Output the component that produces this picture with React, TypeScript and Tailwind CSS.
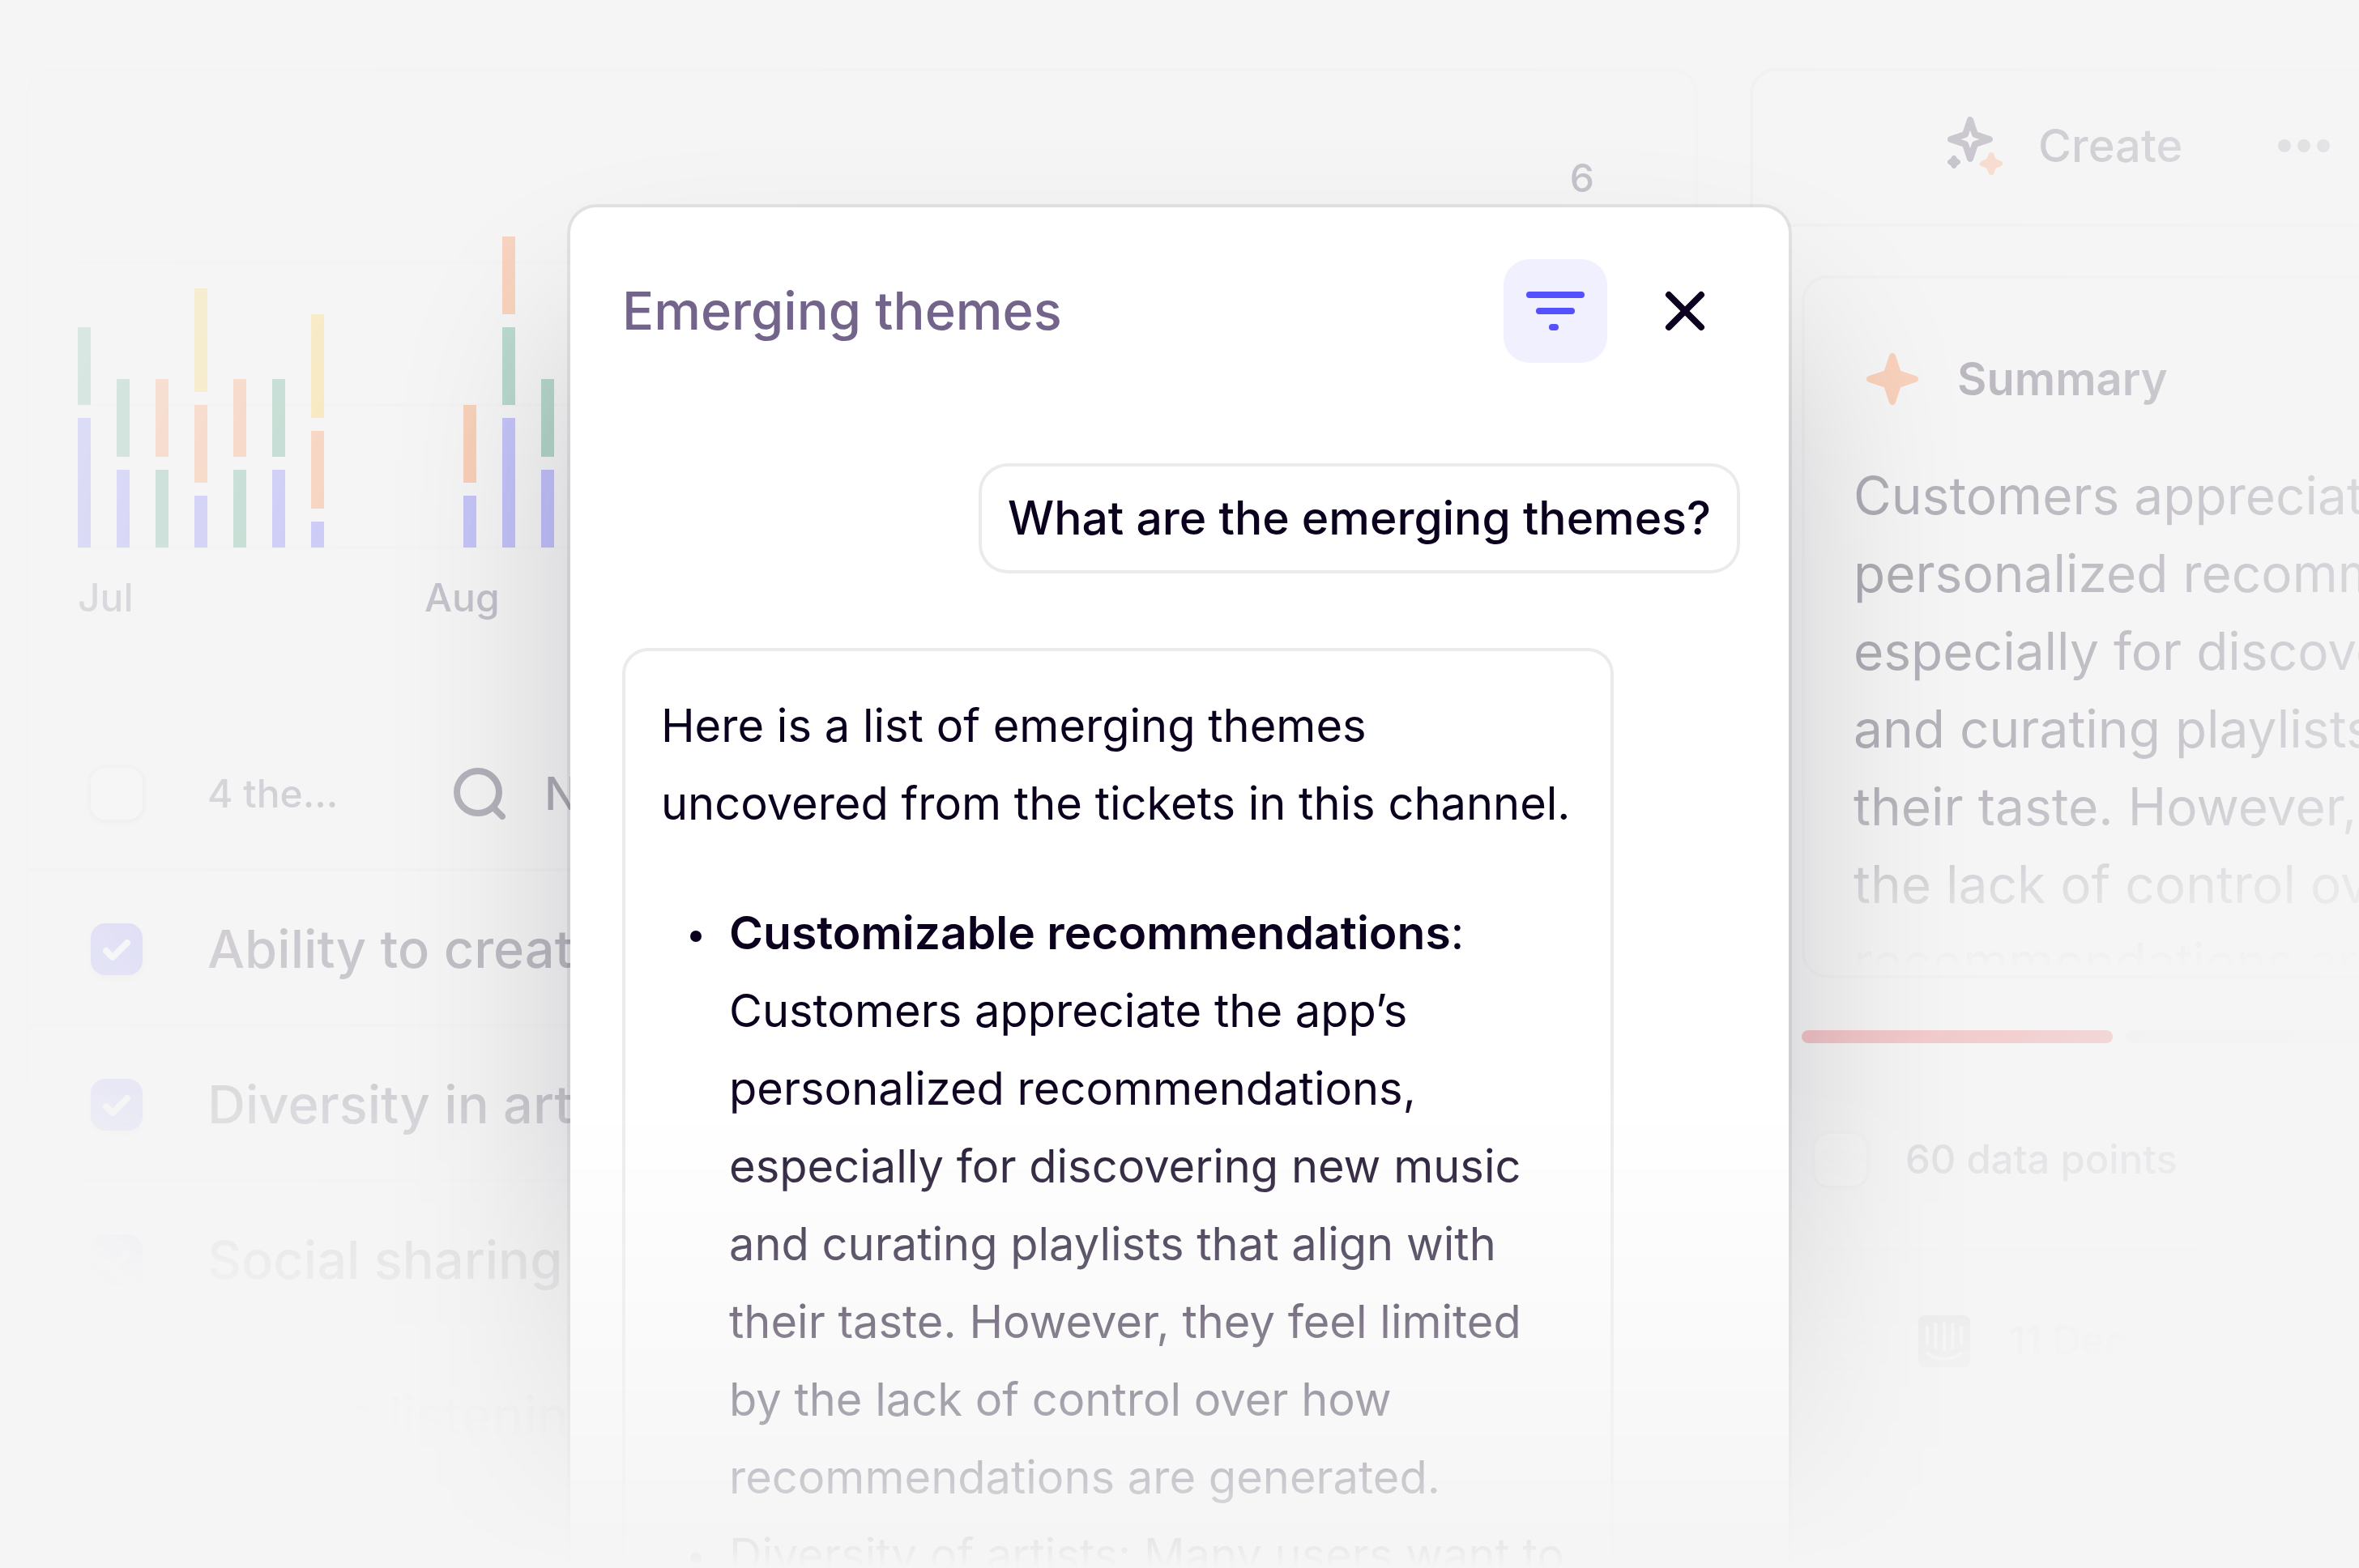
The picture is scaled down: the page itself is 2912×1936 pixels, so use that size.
import { useId } from "react";

type Segment = { color: "violet" | "green" | "orange" | "yellow"; height: number };

const SEGMENT_COLOR = {
  violet: "bg-[#544fff]",
  green: "bg-[#238f68]",
  orange: "bg-[#ff7326]",
  yellow: "bg-[#ffc61f]",
};

const v = (height: number): Segment => ({ color: "violet", height });
const g = (height: number): Segment => ({ color: "green", height });
const o = (height: number): Segment => ({ color: "orange", height });
const y = (height: number): Segment => ({ color: "yellow", height });

// Segments run from the top of a bar to its foot.
const JULY: Segment[][] = [
  [g(96), v(160)],
  [g(96), v(96)],
  [o(96), g(96)],
  [y(128), o(96), v(64)],
  [o(96), g(96)],
  [g(96), v(96)],
  [y(128), o(96), v(32)],
];
const AUGUST: Segment[][] = [
  [o(96), v(64)],
  [o(96), g(96), v(160)],
  [g(96), v(96)],
];

const THEMES = [
  "Ability to create playlists",
  "Diversity in artists",
  "Social sharing",
  "Offline listening",
];

const SUMMARY = [
  "Customers appreciate the app’s",
  "personalized recommendations,",
  "especially for discovering new music",
  "and curating playlists that align with",
  "their taste. However, they feel limited by",
  "the lack of control over how",
  "recommendations are generated.",
];

const ANSWER = [
  "Customers appreciate the app’s",
  "personalized recommendations,",
  "especially for discovering new music",
  "and curating playlists that align with",
  "their taste. However, they feel limited",
  "by the lack of control over how",
  "recommendations are generated.",
];

function Star({ className }: { className: string }) {
  return (
    <svg viewBox="0 0 64 64" className={className} aria-hidden="true">
      <path
        d="M32 4 39 25 60 32 39 39 32 60 25 39 4 32 25 25Z"
        fill="currentColor"
        stroke="currentColor"
        strokeWidth="8"
        strokeLinejoin="round"
      />
    </svg>
  );
}

function CreateIcon() {
  return (
    <svg viewBox="0 0 68 72" className="h-18 w-[68px]" fill="none" aria-hidden="true">
      <path
        d="M28 4 34 22 52 28 34 34 28 52 22 34 4 28 22 22Z"
        stroke="#0c001f"
        strokeWidth="8"
        strokeLinejoin="round"
      />
      <path d="M8 51 10 54 13 56 10 58 8 61 6 58 3 56 6 54Z" fill="#0c001f" stroke="#0c001f" strokeWidth="6" strokeLinejoin="round" />
      <path d="M54 47.500 57 55 64.500 58 57 61 54 68.500 51 61 43.500 58 51 55Z" fill="#ff7326" stroke="#ff7326" strokeWidth="7" strokeLinejoin="round" />
    </svg>
  );
}

function SearchIcon() {
  return (
    <svg viewBox="0 0 64 64" className="size-16 shrink-0" fill="none" stroke="#0c001f" strokeWidth="8" strokeLinecap="round" aria-hidden="true">
      <circle cx="30" cy="30" r="26" />
      <path d="m49 49 11 11" />
    </svg>
  );
}

function IntercomIcon() {
  return (
    <svg viewBox="0 0 64 64" className="size-16 shrink-0" aria-hidden="true">
      <rect width="64" height="64" rx="8" fill="#0c001f" />
      <g fill="none" stroke="#ffffff" strokeWidth="4" strokeLinecap="round">
        <path d="M11 15v20M21.500 11v29M32 10v32M42.500 11v29M53 15v20" />
        <path d="M11 47c12 9 30 9 42 0" />
      </g>
    </svg>
  );
}

function CheckBox({ id, label, checked = false }: { id?: string; label?: string; checked?: boolean }) {
  return (
    <span className="relative size-16 shrink-0">
      <input
        id={id}
        type="checkbox"
        aria-label={label}
        defaultChecked={checked}
        className="peer block size-16 appearance-none rounded-[18px] bg-white shadow-[0_4px_8px_rgb(12_0_31/0.12)] ring-4 ring-[#0c001f]/6 checked:bg-[#544fff] checked:ring-0"
      />
      <svg
        viewBox="0 0 64 64"
        className="pointer-events-none absolute inset-0 hidden size-16 peer-checked:block"
        fill="none"
        stroke="#ffffff"
        strokeWidth="8"
        strokeLinecap="round"
        strokeLinejoin="round"
        aria-hidden="true"
      >
        <path d="M19 34 27 42 45 24" />
      </svg>
    </span>
  );
}

function Bars({ bars }: { bars: Segment[][] }) {
  return (
    <>
      {bars.map((segments, i) => (
        <div key={i} className="flex w-4 flex-col gap-4">
          {segments.map((s, j) => (
            <div key={j} className={SEGMENT_COLOR[s.color]} style={{ height: s.height }} />
          ))}
        </div>
      ))}
    </>
  );
}

function Chart() {
  return (
    <section className="px-[60px] pt-25 font-medium text-[#4f4a65]">
      <p className="pr-16 text-right text-[48px] leading-16">6</p>
      <div className="relative mt-[70px] flex h-[356px] flex-col justify-between">
        <div className="h-1 bg-[#0c001f]/4" />
        <div className="h-1 bg-[#0c001f]/4" />
        <div className="h-1 bg-[#0c001f]/4" />
        <div className="absolute inset-x-0 bottom-0.5 flex items-end">
          <div className="flex w-[428px] items-end gap-8">
            <Bars bars={JULY} />
          </div>
          <div className="flex w-[428px] items-end gap-8 pl-12">
            <Bars bars={AUGUST} />
          </div>
        </div>
      </div>
      <div className="mt-7 flex text-[48px] leading-16">
        <span className="w-[428px]">Jul</span>
        <span>Aug</span>
      </div>
    </section>
  );
}

function ThemesCard() {
  const base = useId();
  return (
    <section className="min-w-0 flex-1 rounded-t-[32px] border-4 border-[#0c001f]/4">
      <Chart />
      <div className="mt-[118px] flex h-46 items-center pl-[76px]">
        <CheckBox label="Select all themes" />
        <span className="ml-20 w-56 text-[48px] leading-16 font-medium text-[#4f4a65]">4 the...</span>
        <label className="ml-20 flex items-center gap-12">
          <SearchIcon />
          <input
            type="text"
            aria-label="Search themes"
            placeholder="Name"
            className="w-96 bg-transparent text-[56px] leading-16 font-medium placeholder:text-[#0c001f] placeholder:opacity-100"
          />
        </label>
      </div>
      {THEMES.map((theme, i) => (
        <div key={theme} className="flex h-48 items-center gap-20 border-t-4 border-[#0c001f]/6 pt-1 pl-[76px]">
          <CheckBox id={`${base}-${i}`} checked />
          <label htmlFor={`${base}-${i}`} className="text-[65px] leading-24 font-medium whitespace-nowrap">
            {theme}
          </label>
        </div>
      ))}
    </section>
  );
}

function SummaryPanel() {
  const base = useId();
  return (
    <section className="w-[752px] shrink-0 overflow-hidden rounded-tl-[32px] border-4 border-r-0 border-[#0c001f]/7">
      <header className="flex h-48 items-center border-b-4 border-[#0c001f]/7 pr-9 pb-1 pl-60">
        <button type="button" className="flex items-center gap-11 text-[56px] leading-16 font-medium">
          <CreateIcon />
          Create
        </button>
        <button type="button" aria-label="More" className="ml-auto flex gap-2">
          <span className="size-4 rounded-full bg-[#0c001f]" />
          <span className="size-4 rounded-full bg-[#0c001f]" />
          <span className="size-4 rounded-full bg-[#0c001f]" />
        </button>
      </header>

      <div className="pt-[60px] pl-[60px]">
        <article className="h-[868px] rounded-l-[32px] border-4 border-r-0 border-[#0c001f]/7 pt-[92px] pl-[60px]">
          <h2 className="flex items-center gap-12 pl-4 text-[56px] leading-16 font-semibold">
            <Star className="size-16 text-[#ff7326]" />
            Summary
          </h2>
          <p className="mt-16 h-157 overflow-hidden text-[64px] leading-24 whitespace-nowrap [mask-image:linear-gradient(black_68%,transparent_101%)]">
            {SUMMARY.map((line) => (
              <span key={line} className="block">
                {line}
              </span>
            ))}
          </p>
        </article>
        <div className="mt-16 flex gap-4 overflow-hidden">
          <div className="h-4 w-96 shrink-0 rounded-full bg-[#e5141f]" />
          <div className="h-4 w-96 shrink-0 rounded-full bg-[#0c001f]/8" />
        </div>
      </div>

      <div className="mt-9 flex h-55 items-center gap-12 border-b-4 border-[#0c001f]/7 pl-[76px] text-[49px] leading-16 font-medium text-[#4f4a65]">
        <CheckBox id={`${base}-all`} />
        <label htmlFor={`${base}-all`}>60 data points</label>
      </div>
      <div className="flex h-56 items-center pl-[76px] text-[49px] leading-16 font-medium text-[#4f4a65]">
        <CheckBox id={`${base}-first`} />
        <label htmlFor={`${base}-first`} className="ml-16 flex items-center gap-12">
          <IntercomIcon />
          11 Dec
        </label>
      </div>
    </section>
  );
}

function ThemesDialog() {
  return (
    <div
      role="dialog"
      aria-labelledby="dialog-title"
      className="flex w-[1504px] max-w-full flex-col rounded-t-[32px] bg-white px-16 pt-16 shadow-[0_0_0_4px_rgb(12_0_31/0.08),0_144px_240px_-16px_rgb(12_0_31/0.2)]"
    >
      <header className="flex items-center gap-8">
        <h1 id="dialog-title" className="flex-1 text-[65px] leading-24 font-medium text-[#73648c]">
          Emerging themes
        </h1>
        <button type="button" aria-label="Filter" className="size-32 rounded-[32px] bg-[#f1f0ff]">
          <svg viewBox="0 0 128 128" className="size-32" aria-hidden="true">
            <g fill="#544fff">
              <rect x="28" y="40" width="72" height="8" rx="4" />
              <rect x="40" y="60" width="48" height="8" rx="4" />
              <rect x="56" y="80" width="12" height="8" rx="4" />
            </g>
          </svg>
        </button>
        <button type="button" aria-label="Close" className="size-32">
          <svg viewBox="0 0 128 128" className="size-32" fill="none" stroke="#0c001f" strokeWidth="8" strokeLinecap="round" aria-hidden="true">
            <path d="m44 44 40 40M84 44 44 84" />
          </svg>
        </button>
      </header>

      <p className="mt-32 self-end rounded-[32px] px-8 py-4 text-[57px] leading-24 font-medium ring-4 ring-[#ebebed]">
        What are the emerging themes?
      </p>

      <div className="mt-24 w-[1224px] max-w-full flex-1 rounded-t-[32px] border-4 border-b-0 border-[#ebebed] p-11 text-[56px] leading-24">
        <p>
          Here is a list of emerging themes
          <br />
          uncovered from the tickets in this channel.
        </p>
        <ul className="mt-16 whitespace-nowrap">
          <li className="relative pl-[84px]">
            <span className="absolute top-[45px] left-9 size-3.5 rounded-full bg-[#0c001f]" />
            <span className="block text-[57px] leading-24">
              <strong className="font-semibold">Customizable recommendations</strong>:
            </span>
            {ANSWER.map((line) => (
              <span key={line} className="block">
                {line}
              </span>
            ))}
          </li>
          <li className="relative pl-[84px]">
            <span className="absolute top-[45px] left-9 size-3.5 rounded-full bg-[#0c001f]" />
            Diversity of artists: Many users want to
          </li>
        </ul>
      </div>
    </div>
  );
}

export default function App() {
  return (
    <div className="h-screen overflow-hidden bg-[#f5f5f5] font-['Inter',sans-serif] text-[#0c001f]">
      <main className="relative h-full overflow-hidden [mask-image:linear-gradient(black_69%,transparent)]">
        <div className="flex h-full gap-16 overflow-hidden pt-21 pl-8 [mask-image:radial-gradient(ellipse_64%_64%_at_50%_37%,rgb(0_0_0/0.57),transparent)]">
          <ThemesCard />
          <SummaryPanel />
        </div>
        <div className="absolute inset-0 flex justify-center pt-64">
          <ThemesDialog />
        </div>
      </main>
    </div>
  );
}
